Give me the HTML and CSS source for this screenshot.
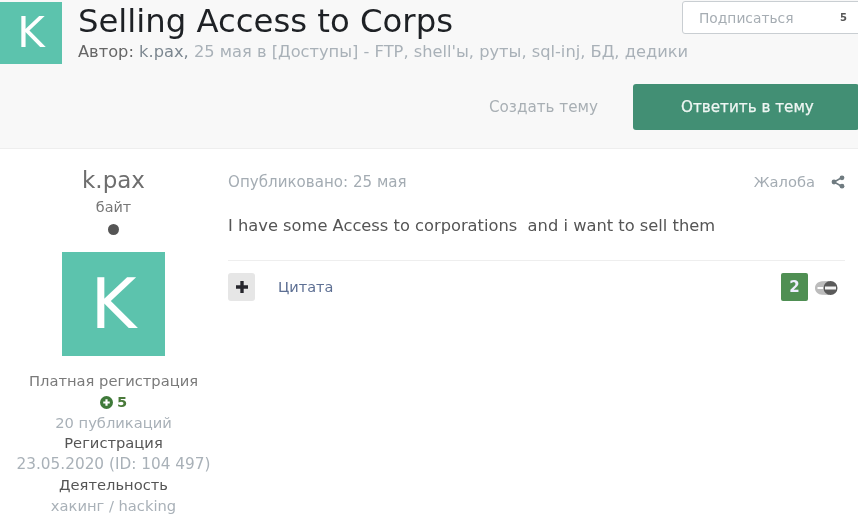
FILE: index.html
```html
<!DOCTYPE html>
<html lang="ru">
<head>
<meta charset="utf-8">
<title>Selling Access to Corps</title>
<link rel="stylesheet" href="styles.css">
</head>
<body>
<div class="page">
  <header class="topic-header">
    <div class="topic-top">
      <div class="avatar-small">K</div>
      <div class="topic-info">
        <h1 class="topic-title">Selling Access to Corps</h1>
        <p class="topic-meta"><span class="meta-label">Автор:</span> <span class="meta-author">k.pax,</span> 25 мая в [Доступы] - FTP, shell'ы, руты, sql-inj, БД, дедики</p>
      </div>
      <div class="follow">
        <span class="follow-label">Подписаться</span>
        <span class="follow-count">5</span>
      </div>
    </div>
    <div class="topic-actions">
      <span class="create-link">Создать тему</span>
      <span class="reply-btn">Ответить в тему</span>
    </div>
  </header>
  <main class="post">
    <aside class="author">
      <div class="author-name">k.pax</div>
      <div class="author-rank">байт</div>
      <div class="author-dot"></div>
      <div class="avatar-large">K</div>
      <div class="author-line group">Платная регистрация</div>
      <div class="author-line rep">
        <svg class="rep-icon" viewBox="0 0 12 12" aria-hidden="true"><circle cx="6" cy="6" r="6" fill="#3f7a3a"/><path d="M5 3h2v2h2v2H7v2H5V7H3V5h2z" fill="#fff"/></svg>
        <span>5</span>
      </div>
      <div class="author-line muted">20 публикаций</div>
      <div class="author-line dark">Регистрация</div>
      <div class="author-line muted date">23.05.2020 (ID: 104 497)</div>
      <div class="author-line dark">Деятельность</div>
      <div class="author-line muted">хакинг / hacking</div>
    </aside>
    <section class="post-body">
      <div class="post-meta">
        <span class="post-date">Опубликовано: 25 мая</span>
        <span class="post-tools">
          <span class="report">Жалоба</span>
          <svg class="share-icon" viewBox="0 0 14 14" aria-hidden="true"><path d="M11 2.500 3 7l8 4.500" fill="none" stroke="#6f7b80" stroke-width="1.500"/><circle cx="11" cy="2.800" r="2.400" fill="#6f7b80"/><circle cx="3" cy="7" r="2.400" fill="#6f7b80"/><circle cx="11" cy="11.200" r="2.400" fill="#6f7b80"/></svg>
        </span>
      </div>
      <p class="post-text">I have some Access to corporations&nbsp; and i want to sell them</p>
      <div class="post-controls">
        <span class="multi-btn"><svg viewBox="0 0 10 10" aria-hidden="true"><path d="M3.600 0h2.800v3.600H10v2.800H6.400V10H3.600V6.400H0V3.600h3.600z" fill="#26262c"/></svg></span>
        <span class="quote">Цитата</span>
        <span class="rep-badge">2</span>
        <svg class="react-icon" viewBox="0 0 23 14" aria-hidden="true"><path d="M0 7C0 3 3 .5 7 .2L14 0v14l-7-.2C3 13.500 0 11 0 7z" fill="#bcbcbc"/><path d="M2.500 7h6" stroke="#fff" stroke-width="2"/><circle cx="15.500" cy="7" r="7" fill="#5a5a5a"/><rect x="10" y="5.500" width="11" height="3" fill="#f4f4f4"/></svg>
      </div>
    </section>
  </main>
</div>
</body>
</html>
```
FILE: styles.css
```css
* { box-sizing: border-box; }
html, body { margin: 0; padding: 0; background: #fff; }
body {
  width: 858px;
  height: 522px;
  overflow: hidden;
  font-family: "DejaVu Sans", Verdana, sans-serif;
  color: #444;
}
.page { filter: blur(0.5px); }
.topic-header {
  height: 149px;
  background: #f8f8f8;
  border-bottom: 1px solid #eee;
  padding-top: 1px;
}
.topic-top { display: flex; align-items: flex-start; height: 83px; }
.avatar-small {
  width: 62px;
  height: 62px;
  margin-top: 1px;
  background: #5cc3ad;
  color: #fff;
  font-size: 42px;
  line-height: 62px;
  text-align: center;
  flex: none;
}
.topic-info { margin-left: 16px; flex: 1; min-width: 0; }
.topic-title {
  margin: 0;
  font-size: 32.300px;
  font-weight: 400;
  line-height: 40px;
  color: #1e2125;
}
.topic-meta {
  margin: 1px 0 0;
  font-size: 16.250px;
  line-height: 20px;
  color: #a9b1b8;
  white-space: nowrap;
}
.meta-label { color: #666; }
.meta-author { color: #7c8790; }
.follow {
  width: 180px;
  height: 33px;
  margin-right: -4px;
  background: #fff;
  border: 1px solid #c9ced2;
  border-radius: 3px;
  display: flex;
  align-items: center;
  justify-content: space-between;
  padding: 0 11px 0 16px;
  font-size: 13.800px;
  color: #a6adb3;
  flex: none;
}
.follow-count { color: #555; font-size: 10px; font-weight: 700; margin-right: 3px; }
.topic-actions { display: flex; justify-content: flex-end; align-items: center; }
.create-link { font-size: 15.200px; color: #a8afb4; margin-right: 35px; }
.reply-btn {
  width: 226px;
  height: 46px;
  margin-right: -1px;
  background: #428f74;
  color: #eef6f3;
  border-radius: 3px;
  font-size: 15.200px;
  font-weight: 400;
  -webkit-text-stroke: 0.25px #eef6f3;
  line-height: 46px;
  padding-left: 48px;
}
.post { display: flex; }
.author {
  width: 228px;
  flex: none;
  text-align: center;
  padding-right: 1px;
  padding-top: 17px;
}
.author-name { font-size: 23px; line-height: 28px; color: #6e6e6e; }
.author-rank { font-size: 14.400px; line-height: 17px; margin-top: 5px; color: #777; }
.author-dot {
  width: 11px;
  height: 11px;
  border-radius: 50%;
  background: #555;
  margin: 8px auto 0;
}
.avatar-large {
  width: 103px;
  height: 104px;
  margin: 17px auto 15px;
  background: #5cc3ad;
  color: #fff;
  font-size: 70px;
  line-height: 104px;
}
.author-line { font-size: 14.700px; line-height: 20.800px; white-space: nowrap; }
.date { font-size: 15.300px; }
.group { color: #7a7a7a; }
.rep { display: flex; justify-content: center; align-items: center; gap: 4px; color: #4a7a3a; font-weight: 700; }
.rep-icon { width: 13px; height: 13px; }
.muted { color: #a9b1b8; }
.dark { color: #555; }
.post-body { flex: 1; min-width: 0; padding-right: 13px; padding-top: 22px; }
.post-meta { display: flex; justify-content: space-between; align-items: center; height: 21px; font-size: 14.700px; }
.post-date { color: #a4acb3; font-size: 15.100px; }
.post-tools { display: flex; align-items: center; gap: 16px; }
.report { color: #a4acb3; }
.share-icon { width: 14px; height: 14px; }
.post-text {
  margin: 23px 0 0;
  font-size: 16.300px;
  line-height: 22px;
  color: #555;
  white-space: nowrap;
}
.post-controls {
  margin-top: 23px;
  border-top: 1px solid #eee;
  padding-top: 12px;
  display: flex;
  align-items: center;
}
.multi-btn {
  width: 27px;
  height: 28px;
  background: #e6e6e6;
  border-radius: 3px;
  display: flex;
  align-items: center;
  justify-content: center;
}
.multi-btn svg { width: 12px; height: 12px; }
.quote { margin-left: 23px; font-size: 14.500px; color: #5d6f93; flex: 1; }
.rep-badge {
  width: 27px;
  height: 28px;
  background: #4f8f53;
  color: #eef;
  border-radius: 2px;
  font-size: 15px;
  font-weight: 700;
  line-height: 28px;
  text-align: center;
}
.react-icon { width: 23px; height: 14px; margin: 2px 7px 0 7px; }
```
